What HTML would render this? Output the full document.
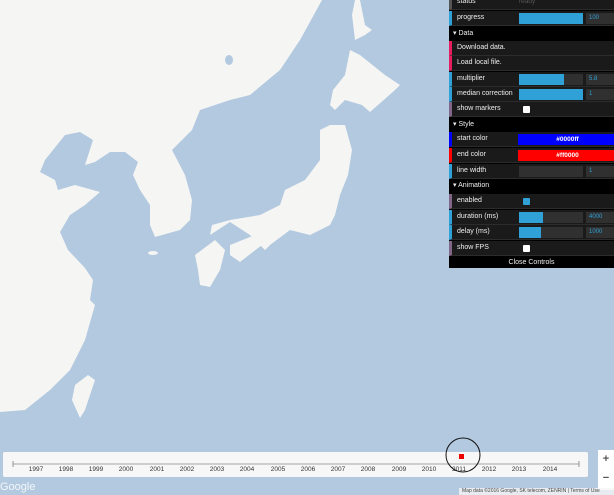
<!DOCTYPE html>
<html><head><meta charset="utf-8"><style>
*{margin:0;padding:0;box-sizing:border-box}
body{width:614px;height:495px;overflow:hidden;background:#b3c9df;font-family:"Liberation Sans",sans-serif;position:relative}
#map{position:absolute;left:0;top:0}
#gui{position:absolute;left:449px;top:0;width:165px;height:268px;background:#000;font-size:7px;color:#eee}
.r{position:absolute;left:0;width:165px;height:15px;background:#1a1a1a;border-left:3px solid #2fa1d6;border-bottom:1px solid #2c2c2c;padding-left:5px;line-height:14px}
.h{position:absolute;left:0;width:165px;height:12px;background:#000;line-height:12px;padding-left:4px}
.bar{position:absolute;left:67px;top:2px;width:64px;height:11px;background:#303030}
.bar i{position:absolute;left:0;top:0;bottom:0;background:#2fa1d6}
.num{position:absolute;left:134px;top:2px;width:31px;height:11px;background:#303030;color:#2fa1d6;font-size:6px;line-height:11px;padding-left:3px}
.cb{position:absolute;left:71px;top:4px;width:7px;height:7px;background:#fff;border-radius:1px}
#tl{position:absolute;left:3px;top:452px;width:585px;height:25px;background:#f7f7f7;border-radius:2px}
#tl span{position:absolute;top:14px;font-size:6.5px;color:#333;width:30px;text-align:center}
</style></head><body>
<svg id="map" width="614" height="495" viewBox="0 0 614 495">
<g fill="#f5f5f4">
<path d="M0,0 L322,0 300,40 280,70 250,95 230,100 200,110 192,130 172,150 185,175 192,200 190,220 180,230 155,237 150,225 150,205 140,190 133,175 138,162 125,152 110,152 95,162 85,165 93,140 80,132 65,135 45,160 40,172 55,180 58,190 75,185 100,192 85,205 70,215 60,232 68,250 85,268 93,280 90,300 95,305 85,340 70,370 50,390 25,410 0,412Z"/>
<path d="M355,0 L360,0 365,25 372,30 365,35 355,40 352,15Z"/>
<path d="M350,50 L360,55 385,75 400,85 395,90 370,112 362,105 345,100 335,110 330,105 333,90 345,75Z"/>
<path d="M330,125 L345,125 352,150 348,175 340,195 335,215 330,225 310,235 290,230 270,245 265,250 250,235 230,222 210,235 212,225 230,220 260,215 280,205 285,190 305,180 320,160 320,130Z"/>
<path d="M230,245 L255,235 262,245 240,262 230,255Z"/>
<path d="M195,255 L215,240 225,250 220,270 210,287 200,285 198,270Z"/>
<path d="M88,375 L95,380 85,410 80,418 72,400 75,385Z"/>
<ellipse cx="153" cy="253" rx="5" ry="2"/>
</g>
<g fill="#b3c9df"><ellipse cx="229" cy="60" rx="4" ry="5"/></g>
</svg>
<div id="gui">
<div class="r" style="top:-5px;border-left-color:#555">status<span style="position:absolute;left:67px;top:0;color:#555;font-size:6.5px">ready</span></div>
<div class="r" style="top:11px">progress<div class="bar" style="width:64px"><i style="width:64px"></i></div><div class="num">100</div></div>
<div class="h" style="top:28px">▾ Data</div>
<div class="r" style="top:41px;border-left-color:#e61d5f">Download data.</div>
<div class="r" style="top:56px;border-left-color:#e61d5f">Load local file.</div>
<div class="r" style="top:72px">multiplier<div class="bar"><i style="width:45px"></i></div><div class="num">5.8</div></div>
<div class="r" style="top:87px">median correction<div class="bar"><i style="width:64px"></i></div><div class="num">1</div></div>
<div class="r" style="top:102px;border-left-color:#806787">show markers<div class="cb"></div></div>
<div class="h" style="top:119px">▾ Style</div>
<div class="r" style="top:132px;border-left-color:#00f">start color<div style="position:absolute;left:66px;top:2px;width:99px;height:11px;background:#0000ff;text-align:center;line-height:11px;color:#fff;font-weight:bold;font-size:6.5px">#0000ff</div></div>
<div class="r" style="top:148px;border-left-color:#f00">end color<div style="position:absolute;left:66px;top:2px;width:99px;height:11px;background:#ff0000;text-align:center;line-height:11px;color:#fff;font-weight:bold;font-size:6.5px">#ff0000</div></div>
<div class="r" style="top:164px">line width<div class="bar" style="background:#303030"></div><div class="num">1</div></div>
<div class="h" style="top:180px">▾ Animation</div>
<div class="r" style="top:194px;border-left-color:#806787">enabled<div class="cb" style="background:#2fa1d6"></div></div>
<div class="r" style="top:210px">duration (ms)<div class="bar"><i style="width:24px"></i></div><div class="num">4000</div></div>
<div class="r" style="top:225px">delay (ms)<div class="bar"><i style="width:22px"></i></div><div class="num">1000</div></div>
<div class="r" style="top:241px;border-left-color:#806787">show FPS<div class="cb"></div></div>
<div style="position:absolute;top:257px;left:0;width:165px;height:11px;text-align:center;line-height:11px">Close Controls</div>
</div>
<div id="tl">
<svg width="585" height="25" style="position:absolute;left:0;top:0">
<line x1="10" y1="12" x2="576" y2="12" stroke="#555" stroke-width="0.6"/>
<line x1="10" y1="9" x2="10" y2="15" stroke="#555" stroke-width="0.6"/>
<line x1="576" y1="9" x2="576" y2="15" stroke="#555" stroke-width="0.6"/>
<rect x="456" y="2" width="5" height="5" fill="#e00"/>
</svg>
<span style="left:18px">1997</span><span style="left:48px">1998</span><span style="left:78px">1999</span><span style="left:108px">2000</span><span style="left:139px">2001</span><span style="left:169px">2002</span><span style="left:199px">2003</span><span style="left:229px">2004</span><span style="left:260px">2005</span><span style="left:290px">2006</span><span style="left:320px">2007</span><span style="left:350px">2008</span><span style="left:381px">2009</span><span style="left:411px">2010</span><span style="left:441px">2011</span><span style="left:471px">2012</span><span style="left:501px">2013</span><span style="left:532px">2014</span>
</div>
<svg width="40" height="40" style="position:absolute;left:444px;top:437px"><circle cx="19" cy="18" r="17" fill="none" stroke="#111" stroke-width="1"/></svg>
<div style="position:absolute;left:598px;top:450px;width:16px;height:40px;background:#fff;font-size:11px;font-weight:bold;color:#555;text-align:center;line-height:19px">+<br>−</div>
<div style="position:absolute;left:0;top:481px;font-size:11px;color:#fff;opacity:.85">Google</div>
<div style="position:absolute;left:459px;top:488px;width:155px;height:7px;background:rgba(245,245,245,.8);font-size:5px;color:#444;line-height:7px;padding-left:3px;white-space:nowrap;overflow:hidden">Map data ©2016 Google, SK telecom, ZENRIN | Terms of Use</div>
</body></html>
